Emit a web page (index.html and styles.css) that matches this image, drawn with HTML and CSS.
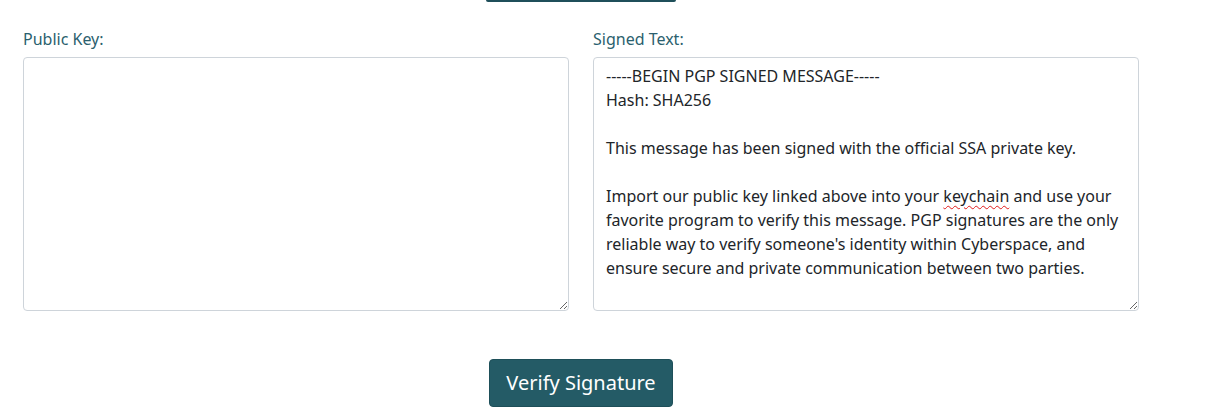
FILE: index.html
```html
<!DOCTYPE html>
<html lang="en">
<head>
<meta charset="utf-8">
<title>Verify Signature</title>
<link rel="stylesheet" href="styles.css">
</head>
<body>
<div class="top-edge"></div>
<form class="verify">
  <div class="fields">
    <div class="field">
      <label class="label" for="pubkey">Public Key:</label>
      <textarea id="pubkey" class="box"></textarea>
    </div>
    <div class="field">
      <label class="label">Signed Text:</label>
      <div class="box" role="textbox" aria-multiline="true">-----BEGIN PGP SIGNED MESSAGE-----
Hash: SHA256

This message has been signed with the official SSA private key.

Import our public key linked above into your <span class="misspelt">keychain</span> and use your favorite program to verify this message. PGP signatures are the only reliable way to verify someone's identity within Cyberspace, and ensure secure and private communication between two parties.</div>
    </div>
  </div>
  <div class="actions">
    <button type="button" class="btn">Verify Signature</button>
  </div>
</form>
</body>
</html>
```

FILE: styles.css
```css
html, body {
  margin: 0;
  padding: 0;
  background: #ffffff;
}
body {
  font-family: "Noto Sans", "Open Sans", sans-serif;
  color: #212529;
  width: 1223px;
  height: 414px;
  overflow: hidden;
}
.top-edge {
  width: 190px;
  height: 2px;
  margin: 0 auto 0 486px;
  background: #1f4f5a;
  border-radius: 0 0 3px 3px;
}
.verify {
  padding: 25px 0 0 23px;
  width: 1116px;
}
.fields {
  display: flex;
  gap: 24px;
}
.field {
  display: flex;
  flex-direction: column;
  width: 546px;
}
.label {
  font-size: 16px;
  line-height: 24px;
  color: #2b5f6e;
  margin-bottom: 6px;
}
.box {
  box-sizing: border-box;
  width: 546px;
  height: 254px;
  margin: 0;
  padding: 6px 12px;
  border: 1px solid #ced4da;
  border-radius: 4px;
  font-family: "Noto Sans", "Open Sans", sans-serif;
  font-size: 16px;
  line-height: 24px;
  color: #212529;
  background: #fff;
  white-space: pre-wrap;
  overflow: auto;
  resize: both;
  outline: none;
}
.misspelt {
  text-decoration: underline wavy #e01b1b;
  text-decoration-thickness: 1px;
  text-underline-offset: 3px;
}
.actions {
  display: flex;
  justify-content: center;
  margin-top: 48px;
}
.btn {
  font-family: "Noto Sans", "Open Sans", sans-serif;
  font-size: 20px;
  line-height: 30px;
  color: #ffffff;
  background: #245b66;
  border: 1px solid #1e4f59;
  border-radius: 4px;
  padding: 8px 16px;
  width: 184px;
  height: 48px;
  cursor: pointer;
}
```
